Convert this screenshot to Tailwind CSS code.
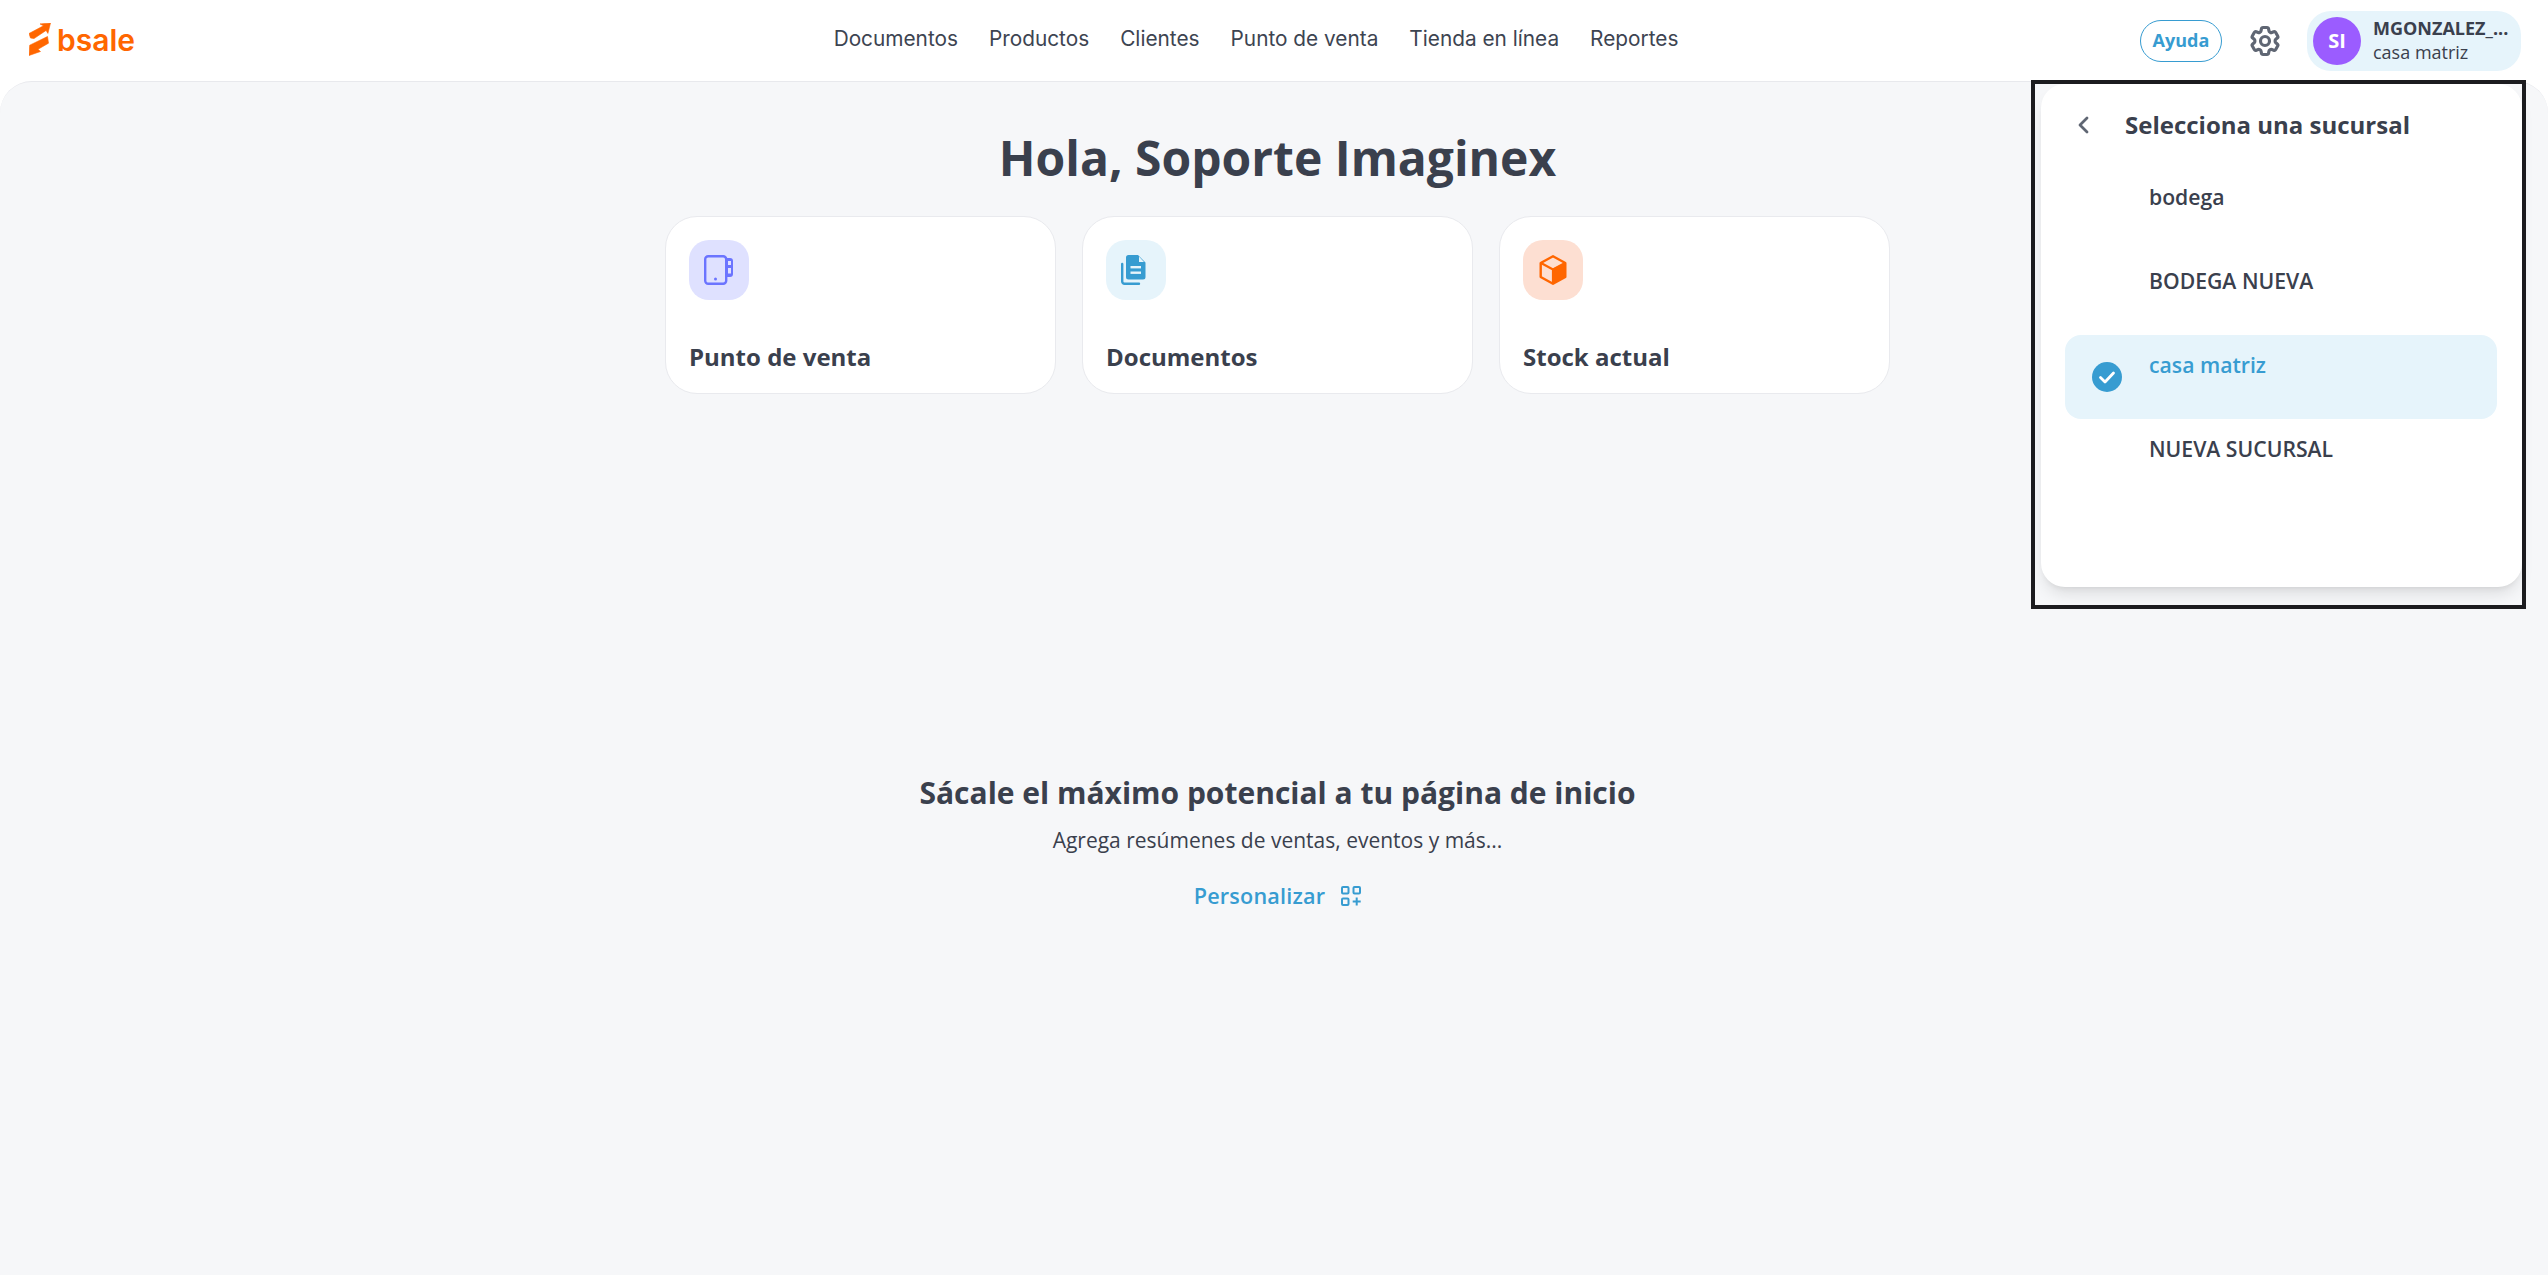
<!DOCTYPE html>
<html lang="es">
  <head>
    <meta charset="UTF-8" />
    <meta name="viewport" content="width=device-width, initial-scale=1.0" />
    <title>Bsale</title>
    <script src="https://cdn.jsdelivr.net/npm/@tailwindcss/browser@4"></script>
  </head>
  <body class="bg-white h-screen flex flex-col overflow-hidden font-['Open_Sans',sans-serif] text-[#3a404d]">
    <header class="h-[81px] shrink-0 flex items-center bg-white">
      <div class="w-[372px] shrink-0 flex items-center pl-[29px] gap-[6px] pb-[2px]">
        <svg class="w-[22px] h-[33px]" viewBox="0 0 22 33" fill="#ff6600" xmlns="http://www.w3.org/2000/svg">
          <path d="M0 10.5 14.5 2.8 11 .9 21.5 0l-2.6 10.4-1.8-3L5 15.6 1.5 15Z" stroke="#ff6600" stroke-width=".6" stroke-linejoin="round"></path>
          <path d="M18.5 13.5 19.5 20.2 9 26.3l2.5 2.2L0 32.5l.7-10.3Z" stroke="#ff6600" stroke-width=".6" stroke-linejoin="round"></path>
        </svg>
        <span class="font-['Inter',sans-serif] font-semibold text-[30px] leading-none text-[#ff6600]">bsale</span>
      </div>
      <nav class="flex-1 flex justify-center gap-[31px] pb-[3px] font-['Inter',sans-serif] text-[20.8px] text-[#3d4451]">
        <a>Documentos</a>
        <a>Productos</a>
        <a>Clientes</a>
        <a>Punto de venta</a>
        <a>Tienda en línea</a>
        <a>Reportes</a>
      </nav>
      <div class="flex items-center pr-[27px]">
        <button class="w-[82px] h-[42px] rounded-full border-[1.5px] border-[#379cd1] text-[#379cd1] font-bold text-[18px]">Ayuda</button>
        <svg class="w-[36px] h-[36px] ml-[25px] text-[#5f6673]" fill="none" stroke="currentColor" stroke-width="2.1" viewBox="0 0 24 24" xmlns="http://www.w3.org/2000/svg">
          <path stroke-linecap="round" stroke-linejoin="round" d="M9.594 3.94c.09-.542.56-.94 1.11-.94h2.593c.55 0 1.02.398 1.11.94l.213 1.281c.063.374.313.686.645.87.074.04.147.083.22.127.325.196.72.257 1.075.124l1.217-.456a1.125 1.125 0 0 1 1.37.49l1.296 2.247a1.125 1.125 0 0 1-.26 1.431l-1.003.827c-.293.241-.438.613-.43.992a7.723 7.723 0 0 1 0 .255c-.008.378.137.75.43.991l1.004.827c.424.35.534.955.26 1.43l-1.298 2.247a1.125 1.125 0 0 1-1.369.491l-1.217-.456c-.355-.133-.75-.072-1.076.124a6.47 6.47 0 0 1-.22.128c-.331.183-.581.495-.644.869l-.213 1.281c-.09.543-.56.94-1.11.94h-2.594c-.55 0-1.019-.398-1.11-.94l-.213-1.281c-.062-.374-.312-.686-.644-.87a6.52 6.52 0 0 1-.22-.127c-.325-.196-.72-.257-1.076-.124l-1.217.456a1.125 1.125 0 0 1-1.369-.49l-1.297-2.247a1.125 1.125 0 0 1 .26-1.431l1.004-.827c.292-.24.437-.613.43-.991a6.932 6.932 0 0 1 0-.255c.007-.38-.138-.751-.43-.992l-1.004-.827a1.125 1.125 0 0 1-.26-1.43l1.297-2.247a1.125 1.125 0 0 1 1.37-.491l1.216.456c.356.133.751.072 1.076-.124.072-.044.146-.086.22-.128.332-.183.582-.495.644-.869l.214-1.28Z"></path>
          <circle cx="12" cy="12" r="3"></circle>
        </svg>
        <div class="ml-[24px] w-[214px] h-[60px] rounded-[24px] bg-[#e6f4fb] flex items-center pl-[6px] gap-[12px]">
          <span class="w-[48px] h-[48px] rounded-full bg-[#9b5cff] text-white font-bold text-[20px] flex items-center justify-center">SI</span>
          <div class="flex flex-col pb-[2px]">
            <span class="font-bold text-[18px] leading-[24px] whitespace-nowrap">MGONZALEZ_...</span>
            <span class="text-[18px] leading-[24px]">casa matriz</span>
          </div>
        </div>
      </div>
    </header>

    <main class="relative flex-1 bg-[#f6f7f9] rounded-t-[32px] border-t border-[#e8e9ed] pl-[7px] flex flex-col items-center">
      <h1 class="mt-[44px] text-[48px] leading-[64px] font-bold">Hola, Soporte Imaginex</h1>

      <div class="mt-[26px] grid grid-cols-[391px_391px_391px] gap-[26px]">
        <a class="h-[178px] bg-white rounded-[32px] border border-[#e9eaee] pt-[23px] px-[23px]">
          <span class="w-[60px] h-[60px] rounded-[20px] bg-[#dfe1ff] flex items-center justify-center">
            <svg class="w-[30px] h-[30px]" viewBox="0 0 30 30" fill="none" xmlns="http://www.w3.org/2000/svg">
              <rect x="1.2" y="1.2" width="21" height="27.6" rx="3" stroke="#6b74ff" stroke-width="2.4"></rect>
              <path d="M23 3h3a3 3 0 0 1 3 3v13a3 3 0 0 1-3 3h-3Z" fill="#6b74ff"></path>
              <rect x="24" y="6" width="3" height="4" fill="#dfe1ff"></rect>
              <rect x="24" y="13" width="3" height="5.5" fill="#dfe1ff"></rect>
              <circle cx="11.5" cy="24" r="1.5" fill="#6b74ff"></circle>
            </svg>
          </span>
          <span class="block mt-[41px] text-[24px] leading-[32px] font-bold">Punto de venta</span>
        </a>
        <a class="h-[178px] bg-white rounded-[32px] border border-[#e9eaee] pt-[23px] px-[23px]">
          <span class="w-[60px] h-[60px] rounded-[20px] bg-[#e6f4fb] flex items-center justify-center">
            <svg class="w-[30px] h-[30px]" viewBox="0 0 30 30" fill="none" xmlns="http://www.w3.org/2000/svg">
              <path d="M7.5 0H17l7.5 7.5V22a2.5 2.5 0 0 1-2.5 2.5H7.5A2.5 2.5 0 0 1 5 22V2.5A2.5 2.5 0 0 1 7.5 0Z" fill="#379cd1"></path>
              <path d="M18 1.5 23 7h-5Z" fill="#e6f4fb"></path>
              <rect x="9.5" y="11" width="10.5" height="2.4" fill="#e6f4fb"></rect>
              <rect x="9.5" y="16.5" width="10.5" height="2.4" fill="#e6f4fb"></rect>
              <path d="M1.2 9v17.5a2.3 2.3 0 0 0 2.3 2.3H18" stroke="#379cd1" stroke-width="2.4" stroke-linecap="round"></path>
            </svg>
          </span>
          <span class="block mt-[41px] text-[24px] leading-[32px] font-bold">Documentos</span>
        </a>
        <a class="h-[178px] bg-white rounded-[32px] border border-[#e9eaee] pt-[23px] px-[23px]">
          <span class="w-[60px] h-[60px] rounded-[20px] bg-[#fddfd2] flex items-center justify-center">
            <svg class="w-[30px] h-[30px]" viewBox="0 0 30 30" fill="none" xmlns="http://www.w3.org/2000/svg">
              <path d="M15 13.5 27.5 7.5V22L15 29Z" fill="#ff6600"></path>
              <path d="M15 1.3 27.3 8v14L15 28.8 2.7 22V8Z" stroke="#ff6600" stroke-width="2.4" stroke-linejoin="round"></path>
              <path d="M3 8 15 14.5 27 8M15 14.5V28" stroke="#ff6600" stroke-width="2.2"></path>
            </svg>
          </span>
          <span class="block mt-[41px] text-[24px] leading-[32px] font-bold">Stock actual</span>
        </a>
      </div>

      <h2 class="mt-[379px] text-[30px] leading-[40px] font-bold">Sácale el máximo potencial a tu página de inicio</h2>
      <p class="mt-[13px] text-[21px] leading-[28px]">Agrega resúmenes de ventas, eventos y más...</p>
      <a class="mt-[28px] flex items-center gap-[16px] text-[#379cd1] text-[21.6px] tracking-[0.2px] leading-[28px] font-[550]">
        Personalizar
        <svg class="w-[20px] h-[20px]" viewBox="0 0 20 20" fill="none" stroke="#379cd1" stroke-width="2" xmlns="http://www.w3.org/2000/svg">
          <rect x="1" y="1" width="6.5" height="6.5" rx="1"></rect>
          <rect x="12.5" y="1" width="6.5" height="6.5" rx="1"></rect>
          <rect x="1" y="12.5" width="6.5" height="6.5" rx="1"></rect>
          <path d="M15.7 11.5v8M11.7 15.5h8"></path>
        </svg>
      </a>

      <div class="absolute -top-[2px] right-[22px] w-[495px] h-[529px] border-4 border-[#1c1c1f]">
        <div class="ml-[6px] w-[481px] h-[503px] bg-white rounded-[24px] shadow-lg">
          <div class="h-[81px] flex items-center pl-[35px]">
            <svg class="w-[16px] h-[20px] text-[#5f6673]" viewBox="0 0 16 20" fill="none" stroke="currentColor" stroke-width="2.8" stroke-linecap="round" stroke-linejoin="round" xmlns="http://www.w3.org/2000/svg">
              <path d="M11 3 4 10l7 7"></path>
            </svg>
            <span class="ml-[33px] text-[24px] font-bold">Selecciona una sucursal</span>
          </div>
          <ul class="mt-[2px] mx-[24px] w-[432px] text-[21.2px] font-[550]">
            <li class="h-[84px] pl-[84px] pt-[14px] leading-[32px]">bodega</li>
            <li class="h-[84px] pl-[84px] pt-[14px] leading-[32px]">BODEGA NUEVA</li>
            <li class="h-[84px] flex rounded-[16px] bg-[#e6f4fb] text-[#379cd1] pl-[27px]">
              <svg class="w-[30px] h-[30px] self-center" viewBox="0 0 30 30" xmlns="http://www.w3.org/2000/svg">
                <circle cx="15" cy="15" r="15" fill="#379cd1"></circle>
                <path d="M8.5 15.5 13 20l8.5-9" fill="none" stroke="#fff" stroke-width="2.8" stroke-linecap="round" stroke-linejoin="round"></path>
              </svg>
              <span class="ml-[27px] mt-[14px] leading-[32px]">casa matriz</span>
            </li>
            <li class="h-[84px] pl-[84px] pt-[14px] leading-[32px]">NUEVA SUCURSAL</li>
          </ul>
        </div>
      </div>
    </main>
  </body>
</html>
